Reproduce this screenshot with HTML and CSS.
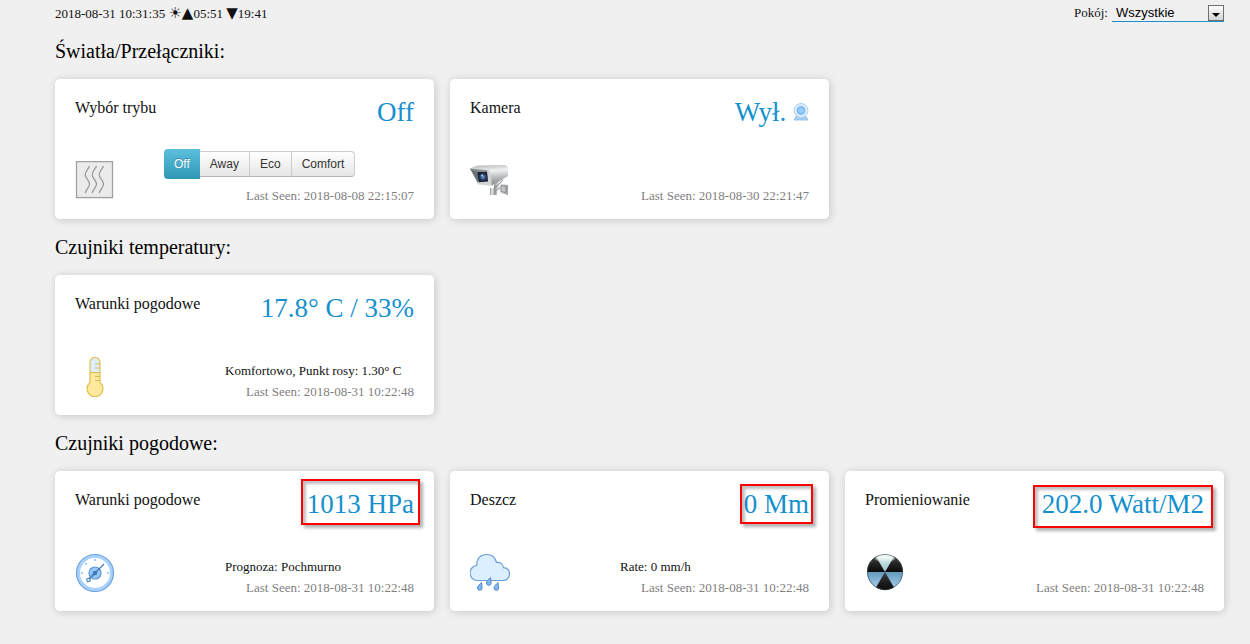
FILE: index.html
```html
<!DOCTYPE html>
<html lang="pl">
<head>
<meta charset="utf-8">
<meta name="viewport" content="width=device-width, initial-scale=1">
<title>Dashboard</title>
<link rel="stylesheet" href="styles.css">
</head>
<body>
<header class="topbar">
  <div class="clock">2018-08-31 10:31:35 <span class="symbol">☀▲</span>05:51 <span class="symbol">▼</span>19:41</div>
  <div class="room">
    <label for="room">Pokój:</label>
    <div class="room-picker">
      <select id="room" class="room-select"><option>Wszystkie</option></select>
      <svg class="room-arrow" width="16" height="16" viewBox="0 0 16 16" aria-hidden="true">
        <defs><linearGradient id="arrowFill" x2="0" y2="1"><stop stop-color="#fff"/><stop offset="1" stop-color="#d2d2d2"/></linearGradient></defs>
        <rect x=".5" y=".5" width="15" height="15" fill="url(#arrowFill)" stroke="#6f6f6f"/>
        <path d="M4 8h8l-4 4z" fill="#000"/>
      </svg>
    </div>
  </div>
</header>
<main>
  <section>
    <h2 class="section-title">Światła/Przełączniki:</h2>
    <div class="cards">
      <article class="card">
        <div class="card-head"><h3 class="name">Wybór trybu</h3><div class="value">Off</div></div>
        <div class="card-body">
          <svg class="icon" viewBox="0 0 40 40" aria-hidden="true">
            <rect x="1.500" y=".6" width="36" height="36" fill="#ebebeb" stroke="#a0a0a0" stroke-width="1.300"/>
            <path id="wave" d="M14.500 5C13.500 8 10 10.500 10.200 14c.2 3 4.300 5.500 4.300 9s-3.300 5-4.300 9" fill="none" stroke="#969696" stroke-width="1.200"/>
            <use href="#wave" x="7"/><use href="#wave" x="14"/>
          </svg>
          <div class="info">
            <div class="modes">
              <button type="button" class="mode mode-active">Off</button><button type="button" class="mode">Away</button><button type="button" class="mode">Eco</button><button type="button" class="mode">Comfort</button>
            </div>
            <p class="seen">Last Seen: 2018-08-08 22:15:07</p>
          </div>
        </div>
      </article>
      <article class="card">
        <div class="card-head"><h3 class="name">Kamera</h3><div class="value">Wył.
          <svg class="webcam" viewBox="0 0 16 18" aria-hidden="true">
            <path d="M4 12h8l3 5H1z" fill="#a4cdf4" stroke="#8bbbe9" stroke-width=".8"/>
            <circle cx="8" cy="7.500" r="7" fill="#dbeefe" stroke="#a9cbed" stroke-width=".9"/>
            <circle cx="8" cy="7.500" r="3.900" fill="#8ac4fb" stroke="#76aee8"/>
            <circle cx="8" cy="7.500" r="2" fill="#9bcdff"/>
          </svg></div></div>
        <div class="card-body">
          <svg class="icon" viewBox="0 0 40 40" aria-hidden="true">
            <defs>
              <linearGradient id="camBody" x1=".35" y1="0" x2=".5" y2="1"><stop stop-color="#b9bbbd"/><stop offset=".3" stop-color="#f0f1f2"/><stop offset=".6" stop-color="#bfc2c4"/><stop offset="1" stop-color="#888b8e"/></linearGradient>
              <linearGradient id="camMount" x2="1"><stop stop-color="#898c8e"/><stop offset=".4" stop-color="#eee"/><stop offset="1" stop-color="#999c9e"/></linearGradient>
              <radialGradient id="camLens"><stop stop-color="#7ca6d6"/><stop offset=".45" stop-color="#355887"/><stop offset="1" stop-color="#182238"/></radialGradient>
            </defs>
            <path d="M20 23h5v7h-5z" fill="url(#camMount)" transform="translate(0 4)"/>
            <path d="M24 24l5-7 5-1-3 7 7 1v10l-8-2-1-4-2 1v5h-3z" fill="url(#camMount)"/>
            <path d="M31 24.500l5 1v6l-5-1z" fill="#c4c6c8" stroke="#85888a" stroke-width=".9"/>
            <path d="M25 27l8-8M24 31l6-4" stroke="#85888a" stroke-width=".8"/>
            <path d="M0 8Q3 5 8 4.500L34 4Q38 4 38 7.500V15L22 24.500z" fill="url(#camBody)"/>
            <path d="M0 7.500L20 9.500 22 25 8 23.500z" fill="#d2d5d7"/>
            <path d="M0 7.500L8 10.500 8 22z" fill="#6c7073"/>
            <path d="M0 7.500L19 9.500 8 11z" fill="#8c8f91"/>
            <path d="M7.500 11l9.500-.5 1 10-9.500.8z" fill="#182033"/>
            <circle cx="13" cy="16" r="4.400" fill="url(#camLens)"/>
            <circle cx="12" cy="14.500" r="1" fill="#b7d0ee"/>
          </svg>
          <div class="info"><p class="seen">Last Seen: 2018-08-30 22:21:47</p></div>
        </div>
      </article>
    </div>
  </section>
  <section>
    <h2 class="section-title">Czujniki temperatury:</h2>
    <div class="cards">
      <article class="card">
        <div class="card-head"><h3 class="name">Warunki pogodowe</h3><div class="value">17.8° C / 33%</div></div>
        <div class="card-body">
          <svg class="icon" viewBox="0 0 40 40" aria-hidden="true">
            <path d="M15 25.500V5.500a5 5 0 0 1 10 0v20a8 8 0 1 1-10 0z" fill="#ffe99c"/>
            <path d="M15 15.500V5.500a5 5 0 0 1 10 0v10z" fill="#dcefff"/>
            <path d="M15 15.500h10M20 7h5M20 11h5M20 19.500h5M20 23.500h5" stroke="#d9ba4c" stroke-width="1.200"/>
            <path d="M15 25.500V5.500a5 5 0 0 1 10 0v20a8 8 0 1 1-10 0z" fill="none" stroke="#e0c050" stroke-width="1.200"/>
          </svg>
          <div class="info"><p class="status">Komfortowo, Punkt rosy: 1.30° C</p><p class="seen">Last Seen: 2018-08-31 10:22:48</p></div>
        </div>
      </article>
    </div>
  </section>
  <section>
    <h2 class="section-title">Czujniki pogodowe:</h2>
    <div class="cards">
      <article class="card">
        <div class="card-head"><h3 class="name">Warunki pogodowe</h3><div class="value">1013 HPa<span class="mark mark-pressure"></span></div></div>
        <div class="card-body">
          <svg class="icon" viewBox="0 0 40 40" aria-hidden="true">
            <circle cx="20" cy="20" r="18.500" fill="#a9d2fb" stroke="#6da3dc" stroke-width="1.200"/>
            <circle cx="20" cy="20" r="15" fill="#fff"/>
            <g fill="#a4cffa"><rect x="19" y="6" width="2" height="2"/><rect x="6" y="19" width="2" height="2"/><rect x="32" y="19" width="2" height="2"/><rect x="10" y="10" width="2" height="2"/></g>
            <circle cx="20" cy="20" r="6" fill="#98c8f7" stroke="#5b94d2" stroke-width="1.200"/>
            <path d="M29 11L14 26" stroke="#427ab7" stroke-width="1.300"/>
            <path d="M20 18l2 2-7 6-1-1z" fill="#4d89c9"/>
            <circle cx="20" cy="20" r="2.300" fill="#427ab7"/>
            <path d="M11.500 26l3-1 1 3-3 1z" fill="#d5e9fc" stroke="#427ab7"/>
          </svg>
          <div class="info"><p class="status">Prognoza: Pochmurno</p><p class="seen">Last Seen: 2018-08-31 10:22:48</p></div>
        </div>
      </article>
      <article class="card">
        <div class="card-head"><h3 class="name">Deszcz</h3><div class="value">0 Mm<span class="mark mark-rain"></span></div></div>
        <div class="card-body">
          <svg class="icon" viewBox="0 0 40 40" aria-hidden="true">
            <path d="M7.500 27.500a7 7.500 0 0 1-.8-15C6.500 5 11 1.500 16.500 1.500S25.500 5 26.500 9.500c4-.7 7 2 7 5.200 4 .2 6 3 6 6.300 0 4-3 6.500-6.500 6.500z" fill="#dceffe" stroke="#6a9fd7" stroke-width="1.200"/>
            <path id="drop" d="M20.500 24.500C18.500 26.500 16.500 28 16.500 30a2.300 2.300 0 0 0 4.600 0c0-2-.6-3.500-.6-5.500z" fill="#82b9f1" stroke="#4f8ccb"/>
            <use href="#drop" x="-9" y="5"/><use href="#drop" x="7.500" y="5"/>
          </svg>
          <div class="info"><p class="status">Rate: 0 mm/h</p><p class="seen">Last Seen: 2018-08-31 10:22:48</p></div>
        </div>
      </article>
      <article class="card">
        <div class="card-head"><h3 class="name">Promieniowanie</h3><div class="value">202.0 Watt/M2<span class="mark mark-solar"></span></div></div>
        <div class="card-body">
          <svg class="icon" viewBox="0 0 40 40" aria-hidden="true">
            <defs>
              <linearGradient id="orb" x2="0" y2="1"><stop stop-color="#d5ecea"/><stop offset=".45" stop-color="#a8c9cf"/><stop offset=".5" stop-color="#629bbb"/><stop offset="1" stop-color="#add2f5"/></linearGradient>
              <linearGradient id="gloss" x2="0" y2="1"><stop stop-color="#fff"/><stop offset="1" stop-color="#fff" stop-opacity=".1"/></linearGradient>
              <linearGradient id="blade" x2="0" y2="1"><stop stop-color="#444"/><stop offset=".5" stop-color="#222"/><stop offset="1" stop-color="#0a0a0a"/></linearGradient>
            </defs>
            <circle cx="20" cy="19" r="18" fill="url(#orb)"/>
            <g fill="url(#blade)"><path d="M20 19H2A18 18 0 0 1 11 3.400z"/><path d="M20 19h18A18 18 0 0 0 29 3.400z"/><path d="M20 19l-9 15.600a18 18 0 0 0 18 0z"/></g>
            <ellipse cx="20" cy="5.500" rx="10" ry="4" fill="url(#gloss)"/>
            <circle cx="20" cy="19" r="17.500" fill="none" stroke="#38464a" stroke-opacity=".6"/>
          </svg>
          <div class="info"><p class="seen">Last Seen: 2018-08-31 10:22:48</p></div>
        </div>
      </article>
    </div>
  </section>
</main>
</body>
</html>
```
FILE: styles.css
```css
* { box-sizing: border-box; }

body {
  margin: 0;
  padding: 0 26px 32px 55px;
  background: #f0f0f0;
  color: #111;
  font-family: "Liberation Serif", "Times New Roman", serif;
  font-size: 13px;
}

h2, h3, p { margin: 0; font-weight: normal; }

.topbar {
  display: flex;
  justify-content: space-between;
  align-items: flex-start;
  height: 23px;
  padding-top: 4px;
  line-height: 18px;
}

.symbol { font-family: "DejaVu Sans", sans-serif; font-size: 15px; }

.room { display: flex; gap: 4px; }

.room-picker { position: relative; }

.room-select {
  appearance: none;
  display: block;
  width: 112px;
  height: 18px;
  padding: 0 20px 0 4px;
  border: 0;
  border-bottom: 1px solid #1e8fc8;
  border-radius: 0;
  background: transparent;
  color: #000;
  font-family: "Liberation Sans", Arial, sans-serif;
  font-size: 13px;
}

.room-arrow {
  position: absolute;
  top: 1px;
  right: 0;
  pointer-events: none;
}

.section-title {
  color: #000;
  font-size: 20px;
  line-height: 56px;
}

.cards {
  display: grid;
  grid-template-columns: repeat(3, minmax(0, 1fr));
  gap: 16px;
}

.card {
  display: flex;
  flex-direction: column;
  justify-content: space-between;
  min-height: 140px;
  padding: 18px 20px 13px;
  border-radius: 5px;
  background: #fff;
  box-shadow: 1px 1px 8px rgba(0, 0, 0, 0.18);
}

.card-head { display: flex; justify-content: space-between; }

.name { font-size: 16px; line-height: 22px; }

.value {
  position: relative;
  color: #1590ce;
  font-size: 27px;
  line-height: 30px;
  white-space: nowrap;
}

.webcam { width: 16px; height: 18px; }

.mark {
  position: absolute;
  border: 2px solid #f00;
  box-shadow: 3px 3px 3px rgba(0, 0, 0, 0.3), inset 3px 3px 3px rgba(0, 0, 0, 0.25);
}

.mark-pressure { inset: -10px -6px -6px; }
.mark-rain { inset: -5px -4px; }
.mark-solar { inset: -4px -9px -9px; }

.card-body { display: flex; align-items: flex-end; gap: 49px; }

.icon { flex: none; width: 40px; height: 40px; margin-bottom: 5px; }

.info { flex: 1; line-height: 21px; }

.status { padding-left: 61px; white-space: nowrap; }

.seen { color: #808080; text-align: right; }

.modes { display: flex; align-items: center; margin-bottom: 6px; }

.mode {
  height: 26px;
  padding: 0 10px;
  border: solid #ccc;
  border-width: 1px 1px 1px 0;
  border-bottom-color: #b3b3b3;
  background: linear-gradient(#fff, #e6e6e6);
  color: #333;
  font-family: "Liberation Sans", Arial, sans-serif;
  font-size: 12px;
}

.mode:last-child { border-radius: 0 4px 4px 0; }

.mode-active {
  height: 30px;
  border: 0;
  border-radius: 4px 0 0 4px;
  background: linear-gradient(#5bc0de, #2f96b4);
  color: #fff;
  text-shadow: 0 -1px 0 rgba(0, 0, 0, 0.25);
}
```
